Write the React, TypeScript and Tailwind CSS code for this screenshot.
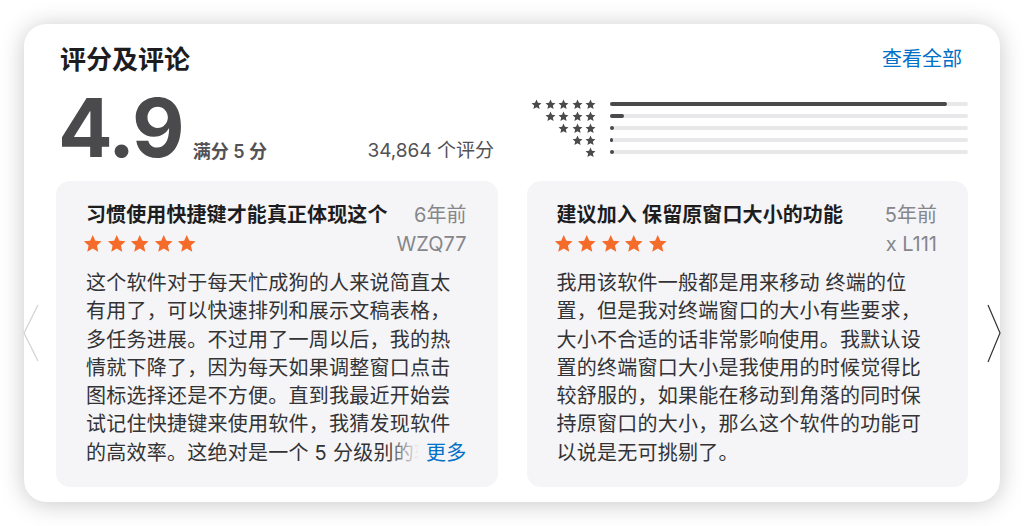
import React from "react";

const FONT = {
  fontFamily: 'Inter, "Noto Sans CJK SC", sans-serif',
};

type Review = {
  title: string;
  date: string;
  author: string;
  body: string;
  more?: boolean;
};

const reviews: Review[] = [
  {
    title: "习惯使用快捷键才能真正体现这个",
    date: "6年前",
    author: "WZQ77",
    body:
      "这个软件对于每天忙成狗的人来说简直太有用了，可以快速排列和展示文稿表格，多任务进展。不过用了一周以后，我的热情就下降了，因为每天如果调整窗口点击图标选择还是不方便。直到我最近开始尝试记住快捷键来使用软件，我猜发现软件的高效率。这绝对是一个 5 分级别的软件",
    more: true,
  },
  {
    title: "建议加入 保留原窗口大小的功能",
    date: "5年前",
    author: "x L111",
    body:
      "我用该软件一般都是用来移动 终端的位置，但是我对终端窗口的大小有些要求，大小不合适的话非常影响使用。我默认设置的终端窗口大小是我使用的时候觉得比较舒服的，如果能在移动到角落的同时保持原窗口的大小，那么这个软件的功能可以说是无可挑剔了。",
  },
];

const histogram = [
  { stars: 5, pct: 94 },
  { stars: 4, pct: 4 },
  { stars: 3, pct: 1 },
  { stars: 2, pct: 0.5 },
  { stars: 1, pct: 1 },
];

function Star({ className }: { className?: string }) {
  return (
    <svg viewBox="0 0 24 24" className={className} fill="currentColor">
      <path d="M12 1.2l3.2 7.1 7.7.75-5.8 5.1 1.7 7.6L12 17.8l-6.8 3.95 1.7-7.6-5.8-5.1 7.7-.75z" />
    </svg>
  );
}

function ReviewCard({ review }: { review: Review }) {
  return (
    <div className="bg-[#f5f5f7] rounded-[14px] h-[306px] pl-[30px] pr-[31px] pt-[22px]">
      <div className="flex justify-between items-center h-[24px]">
        <span className="text-[20px] font-semibold tracking-[0.1px] text-[#1d1d1f]">
          {review.title}
        </span>
        <span className="text-[20px] text-[#86868b]">{review.date}</span>
      </div>
      <div className="flex justify-between items-center mt-[5px] h-[24px]">
        <div className="flex gap-[4px] -ml-[3px]">
          {[0, 1, 2, 3, 4].map((i) => (
            <Star key={i} className="w-[19.5px] h-[19.5px] text-[#f56b2a]" />
          ))}
        </div>
        <span className="text-[20px] text-[#86868b]">{review.author}</span>
      </div>
      <div className="relative mt-[13px] text-[20px] tracking-[0.25px] leading-[28.3px] text-[#333336] max-h-[198px] overflow-hidden pr-[8px]">
        {review.body}
        {review.more && (
          <span className="absolute right-0 bottom-0 w-[80px] h-[28.3px] flex justify-end bg-gradient-to-r from-transparent from-0% via-[#f5f5f7] via-40% to-[#f5f5f7] text-[#0070c9]">
            更多
          </span>
        )}
      </div>
    </div>
  );
}

export default function App() {
  return (
    <div className="w-[1024px] h-[526px] bg-white p-[24px] overflow-hidden relative" style={FONT}>
      <div className="bg-white rounded-[22px] h-[478px] shadow-[0_2px_24px_rgba(0,0,0,0.22)] px-[32px] pt-[17px]">
        <div className="flex justify-between items-center h-[36px]">
          <h2 className="pl-[4px] text-[26px] font-semibold text-[#1d1d1f]">评分及评论</h2>
          <a className="text-[20px] text-[#0070c9] pr-[6px]">查看全部</a>
        </div>

        <div className="flex mt-[20px] h-[68px]">
          <div className="w-[438px] flex items-end pl-[2px]">
            <span className="text-[81px] font-bold leading-none tracking-[-2px] text-[#4a4a4c] -mb-[4px]">
              4.9
            </span>
            <span className="ml-[10px] text-[18px] font-semibold text-[#525256]">满分 5 分</span>
            <span className="ml-auto text-[19px] text-[#525256]">34,864 个评分</span>
          </div>
          <div className="flex-1 flex flex-col pl-[32px] pt-[1px]">
            {histogram.map((row) => (
              <div key={row.stars} className="flex items-center h-[12px]">
                <div className="w-[70px] flex justify-end gap-[2.5px]">
                  {Array.from({ length: row.stars }).map((_, i) => (
                    <Star key={i} className="w-[11px] h-[11px] text-[#4a4a4c]" />
                  ))}
                </div>
                <div className="ml-[14px] flex-1 h-[4px] rounded-full bg-[#e8e8ea]">
                  <div
                    className="h-full rounded-full bg-[#4a4a4c]"
                    style={{ width: `${row.pct}%`, minWidth: 3 }}
                  />
                </div>
              </div>
            ))}
          </div>
        </div>

        <div className="grid grid-cols-2 gap-[29px] mt-[16px]">
          {reviews.map((r) => (
            <ReviewCard key={r.title} review={r} />
          ))}
        </div>
      </div>

      <svg className="absolute left-[22px] top-[304px]" width="18" height="58" viewBox="0 0 18 58">
        <path d="M16 1 L2 29 L16 57" fill="none" stroke="#d2d2d7" strokeWidth="1.2" />
      </svg>
      <svg className="absolute left-[986px] top-[304px]" width="16" height="60" viewBox="0 0 16 60">
        <path d="M2 1 L14 29 L2 58" fill="none" stroke="#333" strokeWidth="1.2" />
      </svg>
    </div>
  );
}
